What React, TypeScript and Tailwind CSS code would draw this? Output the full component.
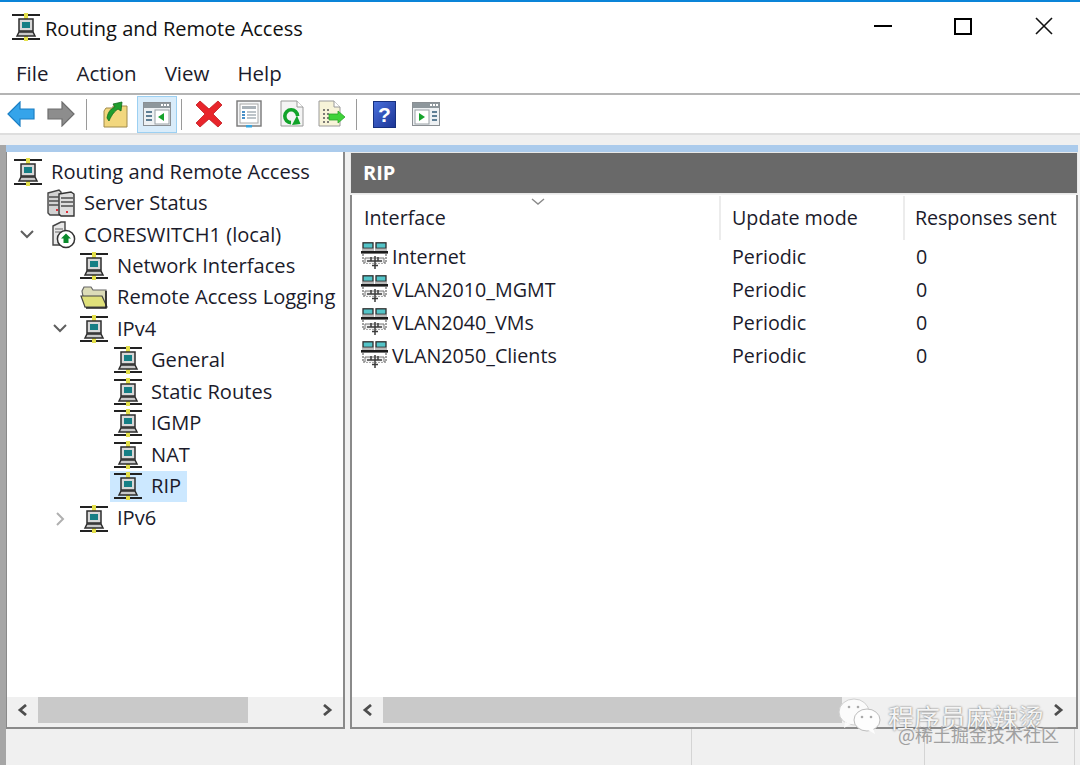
import React from "react";

const NetIcon = () => (
  <svg width="28" height="28" viewBox="0 0 28 28" className="shrink-0">
    <rect x="0" y="1" width="28" height="2" fill="#222" />
    <rect x="0" y="25" width="28" height="2" fill="#222" />
    <rect x="12" y="0" width="4" height="7" fill="#e4e04a" />
    <rect x="12" y="22" width="4" height="6" fill="#e4e04a" />
    <rect x="7" y="6" width="14" height="12" fill="#d8d8d8" stroke="#2d2d2d" strokeWidth="1.5" />
    <rect x="10" y="9" width="8" height="6" fill="#157f85" />
    <path d="M5 23 L7 19 H21 L23 23 Z" fill="#c9c9c9" stroke="#2d2d2d" strokeWidth="1.5" />
  </svg>
);

const ServersIcon = () => (
  <svg width="28" height="28" viewBox="0 0 28 28" className="shrink-0">
    <path d="M1 4 L12 1 L14 3 V26 L3 26 L1 24 Z" fill="#d2d2d2" stroke="#444" strokeWidth="1.4" />
    <path d="M12 5 L24 3 L27 5 V27 L14 27 L12 25 Z" fill="#dedede" stroke="#333" strokeWidth="1.4" />
    <path d="M2 8 H12 M2 12 H12 M2 16 H12 M14 9 H26 M14 13 H26 M14 17 H26" stroke="#4f4f4f" strokeWidth="1.5" />
    <rect x="9" y="20" width="2" height="2" fill="#e0303a" />
    <rect x="19" y="22" width="2" height="2" fill="#e0303a" />
  </svg>
);

const CoreIcon = () => (
  <svg width="24" height="28" viewBox="0 0 24 28" className="shrink-0">
    <path d="M1 5 L9 1 H13 V24 H1 Z" fill="#e8e8e8" stroke="#444" strokeWidth="1.4" />
    <path d="M3 8 H11 M3 11 H11" stroke="#666" strokeWidth="1.2" />
    <circle cx="14" cy="18" r="8.6" fill="#fff" stroke="#333" strokeWidth="1.5" />
    <path d="M14 12.5 L19 17.5 H16.5 V22 H11.5 V17.5 H9 Z" fill="#0a8a2c" />
  </svg>
);

const FolderIcon = () => (
  <svg width="28" height="24" viewBox="0 0 28 24" className="shrink-0">
    <path d="M2 6 L4 2 H11 L13 5 H26 V22 H5 Z" fill="#dcdcb8" stroke="#666" strokeWidth="1.2" />
    <path d="M1 11 H22 L27 22 H5 Z" fill="#dfe07a" stroke="#444" strokeWidth="1.2" />
    <path d="M26 6 V23 H6" fill="none" stroke="#222" strokeWidth="1.6" />
  </svg>
);

const IfaceIcon = () => (
  <svg width="28" height="28" viewBox="0 0 28 28" className="shrink-0">
    <rect x="2" y="0.8" width="10" height="5.5" fill="#53c4c8" stroke="#2d2d2d" strokeWidth="1.3" />
    <rect x="15" y="0.8" width="10" height="5.5" fill="#53c4c8" stroke="#2d2d2d" strokeWidth="1.3" />
    <rect x="1" y="6.5" width="12" height="2.5" fill="#b9b9b9" />
    <rect x="14" y="6.5" width="12" height="2.5" fill="#b9b9b9" />
    <rect x="0" y="9" width="27" height="2.6" fill="#1c1c1c" />
    <path d="M2 12 V21 H25 V12" fill="#fff" stroke="#555" strokeWidth="1.1" strokeDasharray="2 1" />
    <path d="M4 21 V16 H23 V21" fill="#f1f1f1" stroke="#777" strokeWidth="1" />
    <path d="M6 19 H21 M10 15 V19 M17 15 V19 M14 14 V27 M11 23.5 H17" stroke="#3c3c3c" strokeWidth="1.5" fill="none" />
  </svg>
);

const ArrowLeft = ({ fill, stroke }: { fill: string; stroke: string }) => (
  <svg width="28" height="26" viewBox="0 0 28 26" className="shrink-0">
    <path d="M1 13 L13 1 V8 H27 V18 H13 V25 Z" fill={fill} stroke={stroke} strokeWidth="1.2" />
  </svg>
);

const ArrowRight = ({ fill, stroke }: { fill: string; stroke: string }) => (
  <svg width="28" height="26" viewBox="0 0 28 26" className="shrink-0">
    <path d="M27 13 L15 1 V8 H1 V18 H15 V25 Z" fill={fill} stroke={stroke} strokeWidth="1.2" />
  </svg>
);

const UpFolderIcon = () => (
  <svg width="26" height="28" viewBox="0 0 26 28" className="shrink-0">
    <path d="M1 11 L3 8 H10 V6 H24 V27 H1 Z" fill="#f2d77e" stroke="#a08a4a" strokeWidth="1" />
    <path d="M4 18 C5 11 9 8 12 7 L10 4 L19 2 L18 11 L15 9 C12 11 9 14 6 21 Z" fill="#1f9e2e" stroke="#136b1e" strokeWidth="0.8" />
  </svg>
);

const PaneIcon = ({ right }: { right?: boolean }) => (
  <svg width="28" height="24" viewBox="0 0 28 24" className="shrink-0">
    <rect x="0.5" y="0.5" width="27" height="23" fill="#eef1f3" stroke="#8a8f93" />
    <rect x="1" y="1" width="26" height="5" fill="#8e979c" />
    <rect x="18" y="2" width="2" height="2" fill="#fff" />
    <rect x="21" y="2" width="2" height="2" fill="#fff" />
    <rect x="24" y="2" width="2" height="2" fill="#fff" />
    {right ? (
      <>
        <rect x="3" y="8" width="14" height="14" fill="#fff" stroke="#98a0a5" />
        <path d="M7 11 L13 15 L7 19 Z" fill="#16a32c" />
        <path d="M20 10 H25 M20 14 H25 M20 18 H25" stroke="#5f7f95" strokeWidth="2" />
      </>
    ) : (
      <>
        <rect x="12" y="8" width="14" height="14" fill="#fff" stroke="#98a0a5" />
        <path d="M21 11 L15 15 L21 19 Z" fill="#16a32c" />
        <path d="M3 10 H9 M3 14 H9 M3 18 H9" stroke="#5f7f95" strokeWidth="2" />
      </>
    )}
  </svg>
);

const DeleteIcon = () => (
  <svg width="28" height="28" viewBox="0 0 28 28" className="shrink-0">
    <path d="M1 5 L5 1 L14 9 L23 1 L27 5 L18 14 L27 23 L23 27 L14 19 L5 27 L1 23 L10 14 Z" fill="#e8252b" stroke="#c01a20" strokeWidth="0.8" />
  </svg>
);

const PropsIcon = () => (
  <svg width="26" height="28" viewBox="0 0 26 28" className="shrink-0">
    <rect x="1" y="1" width="24" height="25" fill="#f5f6f7" stroke="#777" strokeWidth="1.4" />
    <rect x="4" y="4" width="18" height="19" fill="#fff" stroke="#a8a8a8" />
    <rect x="6" y="6" width="14" height="3" fill="#aab2b8" />
    <path d="M11 12 H20 M11 15 H20 M11 18 H20" stroke="#7d8a93" strokeWidth="1.2" />
    <rect x="6" y="11" width="3" height="2" fill="#4a90c8" />
    <rect x="6" y="14" width="3" height="2" fill="#4a90c8" />
    <rect x="6" y="17" width="3" height="2" fill="#4a90c8" />
    <rect x="10" y="25" width="6" height="2.5" fill="#37a6e0" />
  </svg>
);

const RefreshIcon = () => (
  <svg width="24" height="28" viewBox="0 0 24 28" className="shrink-0">
    <path d="M1 1 H17 L23 7 V26 H1 Z" fill="#f4f4f4" stroke="#9a9a9a" />
    <path d="M17 1 V7 H23" fill="#fff" stroke="#9a9a9a" />
    <path d="M11 22.6 A6.4 6.4 0 1 1 17.6 16" fill="none" stroke="#12a32a" strokeWidth="3.6" />
    <path d="M12 25 L20.5 24 L17 15.5 Z" fill="#12a32a" />
  </svg>
);

const ExportIcon = () => (
  <svg width="28" height="28" viewBox="0 0 28 28" className="shrink-0">
    <path d="M1 1 H16 L22 7 V26 H1 Z" fill="#f7f3d8" stroke="#9a9a9a" />
    <path d="M16 1 V7 H22" fill="#fff" stroke="#9a9a9a" />
    <path d="M5 10 H12 M5 14 H12 M5 18 H12 M5 22 H12" stroke="#555" strokeWidth="1.4" strokeDasharray="2 2" />
    <path d="M27 17 L20 11 V14 H11 V20 H20 V23 Z" fill="#3fd33a" stroke="#2ba32a" strokeWidth="0.8" />
  </svg>
);

const HelpIcon = () => (
  <div className="w-[23px] h-[27px] shrink-0 flex items-center justify-center bg-linear-to-br from-[#4a70dc] to-[#1d3596] border border-[#16307f] text-white font-bold text-[21px] leading-none font-['Liberation_Sans',sans-serif]">?</div>
);

const Sep = ({ cls }: { cls: string }) => <div className={`w-px h-[31px] bg-[#9a9a9a] shrink-0 ${cls}`} />;

const ChevDown = () => (
  <svg width="14" height="9" viewBox="0 0 14 9" className="shrink-0">
    <path d="M1 1 L7 7 L13 1" fill="none" stroke="#5f5f5f" strokeWidth="2" />
  </svg>
);

const ChevRight = () => (
  <svg width="9" height="14" viewBox="0 0 9 14" className="shrink-0">
    <path d="M1 1 L7 7 L1 13" fill="none" stroke="#b0b0b0" strokeWidth="2" />
  </svg>
);

const ScrollArrow = ({ dir }: { dir: "l" | "r" }) => (
  <svg width="11" height="12" viewBox="0 0 11 12" className="shrink-0">
    <path d={dir === "l" ? "M9 1 L3 6 L9 11" : "M2 1 L8 6 L2 11"} fill="none" stroke="#4d4d4d" strokeWidth="2.8" />
  </svg>
);

type Row = { label: string; pad: string; chev?: "d" | "r"; chevBox?: string; icon: React.ReactNode; gap: string; sel?: boolean };

const rows: Row[] = [
  { label: "Routing and Remote Access", pad: "pl-[7px]", icon: <NetIcon />, gap: "ml-[9px]" },
  { label: "Server Status", pad: "pl-[40px]", icon: <ServersIcon />, gap: "ml-[9px]" },
  { label: "CORESWITCH1 (local)", pad: "pl-[13px]", chev: "d", chevBox: "w-[32px]", icon: <CoreIcon />, gap: "ml-[8px]" },
  { label: "Network Interfaces", pad: "pl-[73px]", icon: <NetIcon />, gap: "ml-[9px]" },
  { label: "Remote Access Logging", pad: "pl-[73px]", icon: <FolderIcon />, gap: "ml-[9px]" },
  { label: "IPv4", pad: "pl-[46px]", chev: "d", chevBox: "w-[27px]", icon: <NetIcon />, gap: "ml-[9px]" },
  { label: "General", pad: "pl-[107px]", icon: <NetIcon />, gap: "ml-[9px]" },
  { label: "Static Routes", pad: "pl-[107px]", icon: <NetIcon />, gap: "ml-[9px]" },
  { label: "IGMP", pad: "pl-[107px]", icon: <NetIcon />, gap: "ml-[9px]" },
  { label: "NAT", pad: "pl-[107px]", icon: <NetIcon />, gap: "ml-[9px]" },
  { label: "RIP", pad: "pl-[103px]", icon: <NetIcon />, gap: "ml-[9px]", sel: true },
  { label: "IPv6", pad: "pl-[49px] mt-[1px]", chev: "r", chevBox: "w-[24px]", icon: <NetIcon />, gap: "ml-[9px]" },
];

const Scrollbar = ({ thumb, endPad }: { thumb: string; endPad: string }) => (
  <div className="h-[30px] shrink-0 bg-[#f0f0f0] flex items-start">
    <div className="w-[31px] h-[26px] shrink-0 flex items-center justify-center"><ScrollArrow dir="l" /></div>
    <div className={`h-[26px] bg-[#c9c9c9] shrink-0 ${thumb}`} />
    <div className="h-[26px] flex-1" />
    <div className={`w-[31px] h-[26px] shrink-0 flex items-center justify-center ${endPad}`}><ScrollArrow dir="r" /></div>
  </div>
);

const ifaces = ["Internet", "VLAN2010_MGMT", "VLAN2040_VMs", "VLAN2050_Clients"];

export default function App() {
  return (
    <div className="relative w-[1080px] h-[765px] overflow-hidden bg-white flex flex-col text-[#1b1b2b] font-['Open_Sans','Noto_Sans',sans-serif]">
      <div className="h-[2px] bg-[#0a84d8] shrink-0" />

      {/* Title bar */}
      <div className="h-[54px] shrink-0 flex items-center pl-[12px] pr-[27px]">
        <div className="mb-[4px]"><NetIcon /></div>
        <span className="ml-[5px] text-[20px] text-[#111]">Routing and Remote Access</span>
        <div className="ml-auto flex items-center mb-[6px]">
          <div className="w-[18px] h-[2px] bg-black" />
          <div className="ml-[62px] w-[18px] h-[17px] border-2 border-black" />
          <svg width="18" height="18" viewBox="0 0 18 18" className="ml-[63px]">
            <path d="M1 1 L17 17 M17 1 L1 17" stroke="#111" strokeWidth="1.6" />
          </svg>
        </div>
      </div>

      {/* Menu */}
      <div className="h-[37px] shrink-0 flex items-center pl-[16px] pb-[2px] gap-[28px] text-[20.5px]">
        <span>File</span>
        <span>Action</span>
        <span>View</span>
        <span>Help</span>
      </div>
      <div className="h-[2px] bg-[#b4b4b4] shrink-0" />

      {/* Toolbar */}
      <div className="h-[38px] shrink-0 flex items-center pl-[7px]">
        <ArrowLeft fill="#35a4ea" stroke="#1b7fc4" />
        <div className="ml-[12px]"><ArrowRight fill="#8d8d8d" stroke="#6e6e6e" /></div>
        <Sep cls="ml-[11px]" />
        <div className="ml-[16px]"><UpFolderIcon /></div>
        <div className="ml-[8px] w-[40px] h-[37px] shrink-0 bg-[#d9ecfa] border border-[#9cd0f2] flex items-center justify-center"><PaneIcon /></div>
        <Sep cls="ml-[4px]" />
        <div className="ml-[13px]"><DeleteIcon /></div>
        <div className="ml-[13px]"><PropsIcon /></div>
        <div className="ml-[18px]"><RefreshIcon /></div>
        <div className="ml-[14px]"><ExportIcon /></div>
        <Sep cls="ml-[10px]" />
        <div className="ml-[16px]"><HelpIcon /></div>
        <div className="ml-[16px]"><PaneIcon right /></div>
      </div>
      <div className="h-[2px] bg-[#dedede] shrink-0" />
      <div className="h-[10px] bg-[#f0f0f0] shrink-0" />

      {/* Main */}
      <div className="flex-1 min-h-0 flex bg-[#f0f0f0]">
        <div className="w-[6px] bg-[#a6a6a6] shrink-0" />
        <div className="flex-1 min-w-0 flex flex-col">
          <div className="h-[7px] bg-[#abcbec] shrink-0 mr-[2px]" />
          <div className="flex-1 min-h-0 flex">
            {/* Tree */}
            <div className="w-[339px] shrink-0 flex flex-col bg-white border-r-2 border-b-2 border-l border-[#8a8a8a] text-[20.1px]">
              <div className="flex-1 min-h-0 pt-[4px]">
                {rows.map((r) => (
                  <div key={r.label} className={`h-[31.45px] flex items-center ${r.pad}`}>
                    {r.chev && (
                      <div className={`shrink-0 flex justify-start ${r.chevBox}`}>
                        {r.chev === "d" ? <ChevDown /> : <ChevRight />}
                      </div>
                    )}
                    {r.sel ? (
                      <div className="h-[31px] w-[77px] bg-[#cce8ff] flex items-center pl-[4px]">
                        <NetIcon />
                        <span className="ml-[9px] whitespace-nowrap">{r.label}</span>
                      </div>
                    ) : (
                      <>
                        {r.icon}
                        <span className={`${r.gap} whitespace-nowrap`}>{r.label}</span>
                      </>
                    )}
                  </div>
                ))}
              </div>
              <Scrollbar thumb="w-[210px]" endPad="" />
            </div>

            <div className="w-[5px] shrink-0" />

            {/* Right pane */}
            <div className="flex-1 min-w-0 flex flex-col mr-[2px]">
              <div className="h-[42px] shrink-0 bg-[#696969] border border-[#e8e8e8] flex items-center pl-[12px] text-white font-bold text-[20px]">RIP</div>
              <div className="flex-1 min-h-0 mt-[1px] flex flex-col bg-white border-l-2 border-r-2 border-b-2 border-[#8a8a8a] text-[19.7px]">
                <div className="relative h-[44px] shrink-0 flex mt-[1px]">
                  <div className="w-[369px] shrink-0 border-r-2 border-[#ececec] pl-[12px] flex items-center">
                    <span>Interface</span>
                  </div>
                  <div className="w-[184px] shrink-0 border-r-2 border-[#ececec] pl-[11px] flex items-center">
                    <span>Update mode</span>
                  </div>
                  <div className="pl-[10px] flex items-center whitespace-nowrap">
                    <span className="tracking-[-0.1px]">Responses sent</span>
                  </div>
                  <svg width="14" height="7" viewBox="0 0 14 7" className="absolute left-[179px] top-[2px]">
                    <path d="M1 1 L7 6 L13 1" fill="none" stroke="#8a8a8a" strokeWidth="1.4" />
                  </svg>
                </div>
                <div className="flex-1 min-h-0">
                  {ifaces.map((n) => (
                    <div key={n} className="h-[33px] flex items-center">
                      <div className="w-[369px] shrink-0 flex items-center pl-[9px]">
                        <IfaceIcon />
                        <span className="ml-[3px] whitespace-nowrap">{n}</span>
                      </div>
                      <div className="w-[184px] shrink-0 pl-[11px]">Periodic</div>
                      <div className="pl-[11px]">0</div>
                    </div>
                  ))}
                </div>
                <Scrollbar thumb="w-[459px]" endPad="mr-[2px]" />
              </div>
            </div>
          </div>

          {/* Status bar */}
          <div className="h-[36px] shrink-0 flex">
            <div className="w-[686px] shrink-0 border-r border-[#d4d4d4]" />
            <div className="w-[233px] shrink-0 border-r border-[#d4d4d4]" />
            <div className="w-[150px] shrink-0 border-r border-[#d4d4d4]" />
          </div>
        </div>
      </div>

      {/* Watermark */}
      <div className="absolute left-[838px] top-[697px] flex items-center pointer-events-none">
        <svg width="44" height="38" viewBox="0 0 44 38" className="shrink-0">
          <ellipse cx="16" cy="15" rx="15" ry="13" fill="#fbfbfb" stroke="#cfcfcf" />
          <path d="M7 25 L6 31 L13 27 Z" fill="#fbfbfb" />
          <ellipse cx="29" cy="23" rx="13" ry="11" fill="#fdfdfd" stroke="#bdbdbd" />
          <path d="M35 31 L37 37 L30 33 Z" fill="#fdfdfd" />
          <circle cx="11" cy="10" r="1.3" fill="#aaa" />
          <circle cx="20" cy="10" r="1.3" fill="#aaa" />
          <circle cx="24" cy="20" r="1.3" fill="#aaa" />
          <circle cx="33" cy="20" r="1.3" fill="#aaa" />
        </svg>
      </div>
      <div className="absolute left-[888px] top-[700px] text-[26px] leading-[34px] whitespace-nowrap text-[#f4f4f4] [text-shadow:0_0_2px_#555] font-['Noto_Sans_CJK_SC',sans-serif]">程序员麻辣烫</div>
      <div className="absolute left-[898px] top-[722px] text-[18px] leading-[24px] whitespace-nowrap text-[#a0a0a0] font-['Noto_Sans_CJK_SC',sans-serif]">@稀土掘金技术社区</div>
    </div>
  );
}
